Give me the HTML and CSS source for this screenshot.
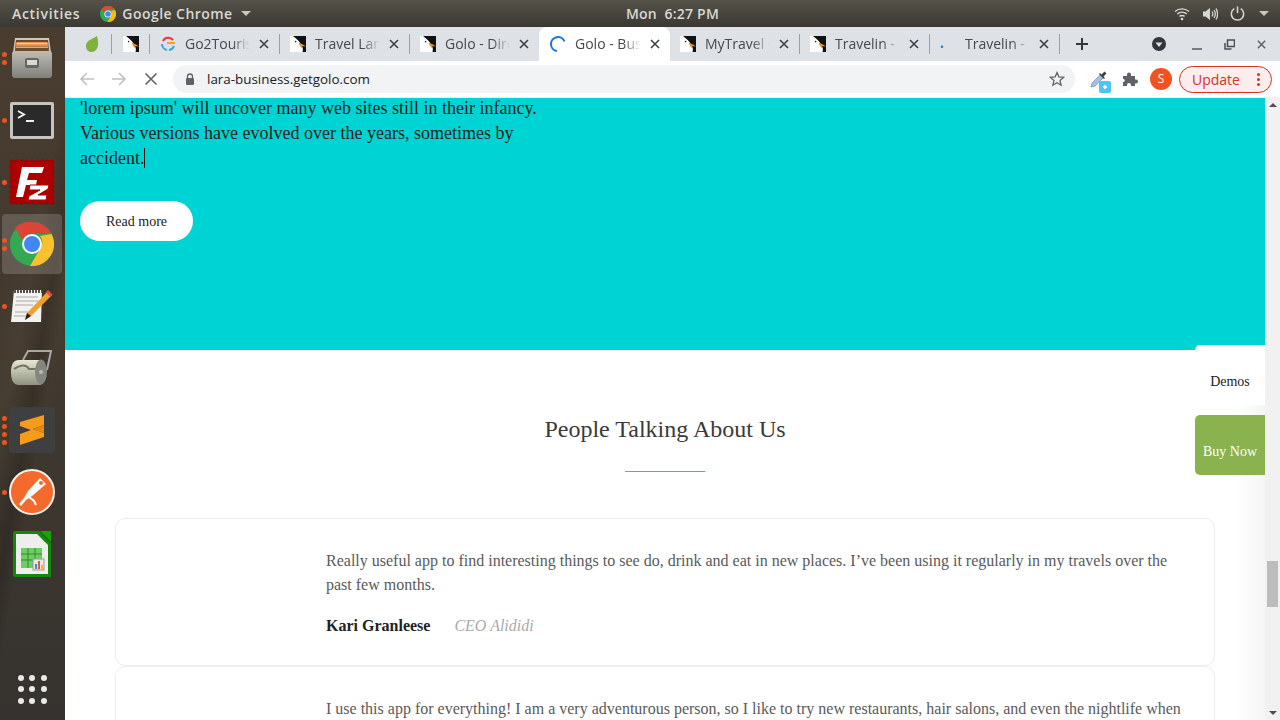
FILE: index.html
```html
<!DOCTYPE html>
<html lang="en">
<head>
  <meta charset="UTF-8" />
  <meta name="viewport" content="width=device-width, initial-scale=1.0"/>
  <title>Golo - Business</title>
  <link rel="stylesheet" href="styles.css">
</head>
<body>

  <svg class="defs" width="0" height="0">
    <symbol id="gull" viewBox="0 0 16 16">
      <rect width="16" height="16" fill="#fff"/>
      <path d="M3 0H16V16H12.5C13.5 13 12.5 10.5 11 8.5C9.5 5.5 7 3 3 0Z" fill="#111"/>
      <path d="M8.5 6.5L13 8.5L16 10.5L12.5 10L11.5 12L9.5 9Z" fill="#e8912d"/>
      <circle cx="5.6" cy="5.6" r="0.8" fill="#222"/>
    </symbol>
    <symbol id="x" viewBox="0 0 12 12">
      <path d="M2 2L10 10M10 2L2 10" stroke="currentColor" stroke-width="1.6" fill="none"/>
    </symbol>
    <linearGradient id="roller" x1="0" y1="0" x2="0" y2="1">
      <stop offset="0" stop-color="#e6e8d4"/><stop offset="1" stop-color="#8f9180"/>
    </linearGradient>
    <linearGradient id="cabinet" x1="0" y1="0" x2="0" y2="1">
      <stop offset="0" stop-color="#bdbcb7"/><stop offset="1" stop-color="#80807b"/>
    </linearGradient>
  </svg>

  <!-- Ubuntu top bar -->
  <header class="topbar">
    <div class="topbar-left">
      <span class="activities">Activities</span>
      <span class="app-name">
        <svg width="16" height="16" viewBox="0 0 16 16">
          <circle cx="8" cy="8" r="8" fill="#34a853"/>
          <path d="M8 0A8 8 0 0 1 15 4H8A4 4 0 0 0 4.4 6.2L1.5 3.2A8 8 0 0 1 8 0Z" fill="#ea4335"/>
          <path d="M15 4A8 8 0 0 1 7.5 16L11 10A4 4 0 0 0 11 5Z" fill="#fbbc05"/>
          <circle cx="8" cy="8" r="3.6" fill="#fff"/><circle cx="8" cy="8" r="2.8" fill="#4285f4"/>
        </svg>
        Google Chrome <i class="caret"></i>
      </span>
    </div>
    <div class="clock">Mon&nbsp; 6:27 PM</div>
    <div class="tray">
      <svg width="16" height="14" viewBox="0 0 16 14" fill="none" stroke="#d6d6d2" stroke-width="1.4">
        <path d="M1 4.5C5 1 11 1 15 4.5M3.2 7C6 4.6 10 4.6 12.8 7M5.4 9.4C7 8.2 9 8.2 10.6 9.4"/>
        <circle cx="8" cy="12" r="1.3" fill="#d6d6d2" stroke="none"/>
      </svg>
      <svg width="16" height="14" viewBox="0 0 16 14" fill="none" stroke="#d6d6d2" stroke-width="1.3">
        <path d="M1 4.5H3.5L8 1V13L3.5 9.5H1Z" fill="#d6d6d2" stroke="none"/>
        <path d="M10 4.5C11 6 11 8 10 9.5M12 3C13.6 5.4 13.6 8.6 12 11M14 1.5C16 5 16 9 14 12.5"/>
      </svg>
      <svg width="15" height="15" viewBox="0 0 15 15" fill="none" stroke="#d6d6d2" stroke-width="1.5">
        <path d="M4.3 2.6A6.2 6.2 0 1 0 10.7 2.6M7.5 0.5V7"/>
      </svg>
      <i class="caret"></i>
    </div>
  </header>

  <div class="desktop">
    <!-- Launcher -->
    <nav class="dock">
      <div class="dock-item">
        <div class="dots"><i></i><i></i></div>
        <svg width="40" height="42" viewBox="0 0 40 42">
          <path d="M3 1H37L39 16H1Z" fill="#c9c8c3"/>
          <path d="M4 3H36L37 14H3Z" fill="#6e4a2c"/>
          <path d="M4.5 5H35.5L36 9H4Z" fill="#e8934f"/>
          <path d="M4.5 6H35.5V7H4.5Z" fill="#f8d2a2"/>
          <path d="M4 9.5H36V11H4Z" fill="#f0a868"/>
          <rect x="0" y="14" width="40" height="27" rx="3" fill="url(#cabinet)"/>
          <rect x="13" y="21" width="14" height="10" rx="2" fill="#66655f"/>
          <rect x="15" y="23" width="10" height="5" fill="#d8d8d4"/>
        </svg>
      </div>
      <div class="dock-item">
        <div class="dots"><i></i></div>
        <svg width="44" height="37" viewBox="0 0 44 37">
          <rect width="44" height="37" rx="2" fill="#c4c4c0"/>
          <rect x="3" y="3" width="38" height="31" fill="#2a2a2a"/>
          <path d="M8 9L14 12.5L8 16" stroke="#eee" stroke-width="2" fill="none"/>
          <rect x="16" y="18" width="8" height="2" fill="#eee"/>
        </svg>
      </div>
      <div class="dock-item">
        <div class="dots"><i></i></div>
        <svg width="46" height="46" viewBox="0 0 46 46">
          <rect x="3" y="3" width="40" height="40" fill="#ad0000" stroke="#a00000" stroke-width="5" stroke-linecap="round" stroke-dasharray="0.1 4.9"/>
          <rect x="3" y="3" width="40" height="40" fill="#ad0000"/>
          <path d="M13 8H35L33 14H20L18 21H28L27 26H17L14 38H7Z" fill="#fff"/>
          <path d="M21 26H40L39 30L29 36H38L37 41H19L20 37L31 31H20Z" fill="#fff" stroke="#ad0000"/>
        </svg>
      </div>
      <div class="dock-item current">
        <div class="dots"><i></i><i></i></div>
        <svg width="44" height="44" viewBox="0 0 44 44">
          <circle cx="22" cy="22" r="22" fill="#34a853"/>
          <path d="M22 0A22 22 0 0 1 41.5 12H22A10 10 0 0 0 12.6 18.6L5 5.8A22 22 0 0 1 22 0Z" fill="#db4437"/>
          <path d="M41.5 12A22 22 0 0 1 20 44L30 27A10 10 0 0 0 30 14Z" fill="#fbc02d"/>
          <circle cx="22" cy="22" r="10" fill="#fff"/>
          <circle cx="22" cy="22" r="8" fill="#4285f4"/>
        </svg>
      </div>
      <div class="dock-item">
        <div class="dots"><i></i></div>
        <svg width="42" height="34" viewBox="0 0 42 34">
          <path d="M3 1H31L30 33H0Z" fill="#f2f2ee"/>
          <path d="M3 2.5H31" stroke="#555" stroke-width="3" stroke-dasharray="2 1"/>
          <path d="M5 8H27M5 12H27M4 16H22M4 23H19M3 27H15" stroke="#aaa"/>
          <path d="M37 2L41 6L20 27L14 31L16 24Z" fill="#f0a030"/>
          <path d="M37 1L41.5 5.5L39.5 8L35 3.5Z" fill="#d9534f"/>
          <path d="M16 24L14 31L20 27Z" fill="#222"/>
        </svg>
      </div>
      <div class="dock-item">
        <div class="dots"></div>
        <svg width="42" height="36" viewBox="0 0 42 36">
          <path d="M12 10L17 1H40L36 20" stroke="#a8a8a4" stroke-width="2" fill="none"/>
          <path d="M8 10H30V35H8Q0 35 0 22Q0 10 8 10Z" fill="url(#roller)"/>
          <path d="M3 19Q14 12 18 19H28" stroke="#73745f" stroke-width="2" fill="none"/>
          <ellipse cx="30" cy="22" rx="6" ry="12.5" fill="#868681"/>
          <circle cx="30" cy="22" r="2" fill="#bbb"/>
        </svg>
      </div>
      <div class="dock-item">
        <div class="dots"><i></i><i></i><i></i><i></i></div>
        <svg width="46" height="46" viewBox="0 0 46 46">
          <rect width="46" height="46" rx="3" fill="#3f3f3f"/>
          <path d="M11 15L35 8V18L24 22L35 26V30L11 38V27L22 23L11 19Z" fill="#f89b1c"/>
          <path d="M22 23L35 18V26L24 22Z" fill="#e58a10"/>
        </svg>
      </div>
      <div class="dock-item">
        <div class="dots"><i></i></div>
        <svg width="46" height="46" viewBox="0 0 46 46">
          <circle cx="23" cy="23" r="22" fill="#f4692c" stroke="#f4f0ec" stroke-width="2"/>
          <path d="M31 9L37 15L23 27L17 31L12 37L10 35L15 29L19 22Z" fill="#fff"/>
          <path d="M20 28L25 32L27 36" stroke="#fff" stroke-width="2" fill="none"/>
          <circle cx="32" cy="14" r="2" fill="#f4692c"/>
        </svg>
      </div>
      <div class="dock-item">
        <div class="dots"></div>
        <svg width="38" height="46" viewBox="0 0 38 46">
          <path d="M2 0H26L38 12V46H2Q0 46 0 44V2Q0 0 2 0Z" fill="#138a07"/>
          <path d="M27 0H38V11Z" fill="#18a303"/>
          <path d="M3 3H24L35 14V43H3Z" fill="#eeeeec"/>
          <rect x="8" y="17" width="21" height="20" fill="#6fcb63"/>
          <path d="M8 23H29M8 29H29M15 17V37M22 17V37" stroke="#2f8d23"/>
          <rect x="20" y="28" width="11" height="11" fill="#e8e8e8" stroke="#999"/>
          <rect x="22" y="33" width="2" height="5" fill="#3d8fd0"/>
          <rect x="25" y="30" width="2" height="8" fill="#d9622b"/>
          <rect x="28" y="34" width="2" height="4" fill="#eeb32a"/>
        </svg>
      </div>
      <div class="dock-item apps">
        <div class="dots"></div>
        <div class="apps-grid"><i></i><i></i><i></i><i></i><i></i><i></i><i></i><i></i><i></i></div>
      </div>
    </nav>

    <div class="browser">
      <!-- Tabs -->
      <div class="tabstrip">
        <div class="tab pinned first">
          <svg width="16" height="16" viewBox="0 0 16 16">
            <path d="M12 0C8 3 1 4 1 10C1 13 3 16 6 16C12 16 15 10 12 0Z" fill="#7cb342"/>
          </svg>
        </div>
        <i class="sep"></i>
        <div class="tab pinned"><svg class="fav"><use href="#gull"/></svg></div>
        <i class="sep"></i>
        <div class="tab">
          <svg class="fav" viewBox="0 0 16 16" fill="none" stroke-width="2">
            <path d="M13 4A6 6 0 0 0 3 5" stroke="#e53935"/>
            <path d="M2 8A6 6 0 0 0 7 14" stroke="#29a9e0"/>
            <path d="M7 7H15" stroke="#f2a31a"/>
            <path d="M14 10A6 6 0 0 1 9 14" stroke="#29a9e0"/>
          </svg>
          <span class="title">Go2Tourism</span>
          <svg class="close"><use href="#x"/></svg>
        </div>
        <i class="sep"></i>
        <div class="tab">
          <svg class="fav"><use href="#gull"/></svg>
          <span class="title">Travel Landing</span>
          <svg class="close"><use href="#x"/></svg>
        </div>
        <i class="sep"></i>
        <div class="tab">
          <svg class="fav"><use href="#gull"/></svg>
          <span class="title">Golo - Directory</span>
          <svg class="close"><use href="#x"/></svg>
        </div>
        <div class="tab active">
          <svg class="fav" viewBox="0 0 16 16" fill="none">
            <path d="M14.5 5.5A7 7 0 1 0 7 15" stroke="#1a73e8" stroke-width="2"/>
          </svg>
          <span class="title">Golo - Business</span>
          <svg class="close"><use href="#x"/></svg>
        </div>
        <div class="tab">
          <svg class="fav"><use href="#gull"/></svg>
          <span class="title">MyTravel - Tours</span>
          <svg class="close"><use href="#x"/></svg>
        </div>
        <i class="sep"></i>
        <div class="tab">
          <svg class="fav"><use href="#gull"/></svg>
          <span class="title">Travelin - Tours</span>
          <svg class="close"><use href="#x"/></svg>
        </div>
        <i class="sep"></i>
        <div class="tab">
          <svg class="fav" viewBox="0 0 16 16"><circle cx="2" cy="10.7" r="1.2" fill="#1a73e8"/></svg>
          <span class="title">Travelin - Tours</span>
          <svg class="close"><use href="#x"/></svg>
        </div>
        <i class="sep"></i>
        <svg class="new-tab" width="12" height="12" viewBox="0 0 12 12">
          <path d="M6 0V12M0 6H12" stroke="#33363a" stroke-width="2"/>
        </svg>
        <div class="window-btns">
          <svg width="14" height="14" viewBox="0 0 14 14">
            <circle cx="7" cy="7" r="7" fill="#33373c"/>
            <path d="M3.5 5.5H10.5L7 10Z" fill="#dee1e6"/>
          </svg>
          <svg width="11" height="11" viewBox="0 0 11 11"><path d="M0 10H10" stroke="#5f6368" stroke-width="1.6"/></svg>
          <svg width="11" height="11" viewBox="0 0 11 11" fill="none" stroke="#4a4d52" stroke-width="1.5">
            <rect x="3.5" y="1" width="7" height="6.5"/><path d="M1 4V10H7.5" />
          </svg>
          <svg class="win-close" width="11" height="11"><use href="#x"/></svg>
        </div>
      </div>

      <!-- Toolbar -->
      <div class="toolbar">
        <div class="nav-btn">
          <svg width="16" height="16" viewBox="0 0 16 16" fill="none" stroke="#bdc1c6" stroke-width="1.6"><path d="M15 8H2M8 2L2 8L8 14"/></svg>
        </div>
        <div class="nav-btn">
          <svg width="16" height="16" viewBox="0 0 16 16" fill="none" stroke="#bdc1c6" stroke-width="1.6"><path d="M1 8H14M8 2L14 8L8 14"/></svg>
        </div>
        <div class="nav-btn">
          <svg width="14" height="14" viewBox="0 0 14 14" fill="none" stroke="#5f6368" stroke-width="1.6"><path d="M1.5 1.5L12.5 12.5M12.5 1.5L1.5 12.5"/></svg>
        </div>
        <div class="omnibox">
          <svg width="12" height="14" viewBox="0 0 12 14">
            <rect x="2" y="6" width="8" height="7" rx="1" fill="#5f6368"/>
            <path d="M3.5 6V4.5A2.5 2.5 0 0 1 8.5 4.5V6" fill="none" stroke="#5f6368" stroke-width="1.3"/>
          </svg>
          <span class="url">lara-business.getgolo.com</span>
          <svg class="star" width="16" height="16" viewBox="0 0 16 16">
            <path d="M8 1.6L9.9 6L14.6 6.4L11 9.5L12.1 14.2L8 11.7L3.9 14.2L5 9.5L1.4 6.4L6.1 6Z" fill="none" stroke="#5f6368" stroke-width="1.3"/>
          </svg>
        </div>
        <div class="ext-btn dropper">
          <svg width="18" height="18" viewBox="0 0 18 18">
            <path d="M1 17L2 13L10 5L13 8L5 16Z" fill="#9cc3e4" stroke="#6f7c88" stroke-width="0.6"/>
            <path d="M9 4L14 9L15 8L13.5 6.5L16.5 3.5L14.5 1.5L11.5 4.5L10 3Z" fill="#3c4043"/>
          </svg>
          <i class="ext-badge"></i>
        </div>
        <div class="ext-btn">
          <svg width="16" height="16" viewBox="0 0 16 16">
            <path d="M1 5H5V3.5A2 2 0 0 1 9 3.5V5H13V8.5H14A2 2 0 0 1 14 12.5H13V15H9V14A2 2 0 0 0 5 14V15H1V11H2A2 2 0 0 0 2 8H1Z" fill="#5f6368"/>
          </svg>
        </div>
        <div class="avatar">S</div>
        <div class="update">
          <span>Update</span>
          <i class="kebab"><b></b><b></b><b></b></i>
        </div>
      </div>

      <div class="viewport">
        <main class="page">
          <section class="hero">
            <p>'lorem ipsum' will uncover many web sites still in their infancy. Various versions have evolved over the years, sometimes by <span class="typed">accident.</span></p>
            <a class="read-more">Read more</a>
          </section>

          <section class="testimonials">
            <h2>People Talking About Us</h2>
            <div class="rule"></div>
            <article class="card">
              <p>Really useful app to find interesting things to see do, drink and eat in new places. I’ve been using it regularly in my travels over the past few months.</p>
              <div class="byline"><strong>Kari Granleese</strong><em>CEO Alididi</em></div>
            </article>
            <article class="card">
              <p>I use this app for everything! I am a very adventurous person, so I like to try new restaurants, hair salons, and even the nightlife when I travel to new places.</p>
            </article>
          </section>

          <div class="page-shade"></div>
          <div class="side-links">
            <a class="demos">Demos</a>
            <a class="buy">Buy Now</a>
          </div>
        </main>
        <div class="scrollbar">
          <i class="arrow up"></i>
          <div class="thumb"></div>
          <i class="arrow down"></i>
        </div>
      </div>
    </div>
  </div>

</body>
</html>
```

FILE: styles.css
```css
* { box-sizing: border-box; }
html, body { height: 100%; }
body { margin: 0; overflow: hidden; font-family: "Open Sans", sans-serif; background: #3a3630; }
.defs { display: block; height: 0; }

/* top bar */
.topbar {
  height: 27px; display: grid; grid-template-columns: 1fr auto 1fr; align-items: center;
  padding: 0 11px 0 12px;
  background: linear-gradient(#55524a, #3a3832);
  color: #d9d8d3; font-size: 14px; font-weight: 600;
}
.topbar-left { display: flex; align-items: center; gap: 20px; }
.activities { letter-spacing: 0.7px; }
.app-name { display: flex; align-items: center; gap: 6px; letter-spacing: 0.45px; }
.caret {
  display: inline-block; width: 0; height: 0; margin-left: 2px;
  border: 5px solid transparent; border-top-color: #c9c8c3; border-bottom: 0;
}
.clock { margin-left: 64px; letter-spacing: 0.2px; }
.tray { justify-self: end; display: flex; align-items: center; gap: 12px; }

.desktop { display: flex; height: 693px; }

/* launcher */
.dock {
  width: 65px; flex: none; display: flex; flex-direction: column;
  background:
    linear-gradient(100deg, transparent 40%, rgba(20,16,12,0.25) 52%, transparent 60%),
    linear-gradient(115deg, transparent 30%, rgba(90,78,60,0.28) 45%, transparent 60%),
    linear-gradient(#4a3d30, #3e372e 60%, #35332f);
}
.dock-item { height: 62px; flex: none; display: flex; align-items: center; justify-content: center; padding-right: 1px; position: relative; }
.dock-item.current::before {
  content: ""; position: absolute; left: 2px; top: 1px; width: 60px; height: 60px;
  border-radius: 4px; background: rgba(255,255,255,0.17);
}
.dock-item svg { position: relative; }
.dots { position: absolute; left: 2px; top: 0; bottom: 0; display: flex; flex-direction: column; justify-content: center; gap: 3px; }
.dots i { width: 5px; height: 5px; border-radius: 50%; background: #e95420; }
.apps { margin-top: auto; }
.apps-grid { display: grid; grid-template-columns: repeat(3, 6px); gap: 5.5px; }
.apps-grid i { width: 6px; height: 6px; border-radius: 50%; background: #e9e9e7; }

.browser { flex: 1; min-width: 0; display: flex; flex-direction: column; }

/* tabs */
.tabstrip { height: 34px; flex: none; display: flex; align-items: center; padding-left: 1px; background: #dee1e6; }
.tab { width: 129px; height: 34px; flex: none; display: flex; align-items: center; gap: 9px; padding: 0 9px 0 10px; color: #45484d; font-size: 14px; line-height: 32px; }
.tab.pinned { width: 37px; padding: 0; justify-content: center; }
.tab.pinned.first { width: 45px; padding-left: 9px; }
.tab.active { width: 131px; background: #fff; border-radius: 8px 8px 0 0; padding-left: 11px; }
.tab .title { flex: 1; min-width: 0; white-space: nowrap; overflow: hidden; -webkit-mask-image: linear-gradient(90deg, #000 72%, transparent 98%); mask-image: linear-gradient(90deg, #000 72%, transparent 98%); }
.fav { width: 16px; height: 16px; flex: none; }
.close { width: 12px; height: 12px; flex: none; margin-left: -2px; color: #3c4043; }
.sep { width: 1px; height: 20px; flex: none; background: #9aa0a6; }
.new-tab { margin-left: 16px; }
.window-btns { margin-left: auto; display: grid; grid-template-columns: 44px repeat(3, 32px); justify-items: center; align-items: center; padding-right: 3px; }
.win-close { color: #5f6368; }

/* toolbar */
.toolbar { height: 37px; flex: none; display: flex; align-items: center; padding: 0 8px 0 6px; background: #fff; border-bottom: 1px solid #eee; }
.nav-btn { width: 32px; height: 28px; flex: none; display: flex; align-items: center; justify-content: center; }
.omnibox {
  flex: 1; height: 28px; margin-left: 6px; display: flex; align-items: center; padding: 0 10px 0 11px;
  border-radius: 14px; background: #f1f3f4; color: #202124; font-size: 13.4px;
}
.url { margin-left: 11px; }
.star { margin-left: auto; }
.ext-btn { width: 31px; height: 28px; flex: none; display: flex; align-items: center; justify-content: center; position: relative; }
.dropper { margin-left: 8px; }
.ext-badge { position: absolute; right: 3px; bottom: 0; width: 12px; height: 12px; border-radius: 2px; background: radial-gradient(circle, #fff 1.5px, #4fc3f7 2px); }
.avatar { width: 22px; height: 22px; flex: none; margin: 0 7px 0 5px; border-radius: 50%; background: #f4511e; color: #fff; font-size: 12px; line-height: 22px; text-align: center; }
.update {
  width: 93px; height: 27px; flex: none; display: flex; align-items: center; justify-content: space-between;
  padding: 0 11px 0 12px; border: 1px solid #d93025; border-radius: 14px; background: #fdeeed; color: #d93025; font-size: 14px;
}
.kebab { display: flex; flex-direction: column; gap: 2px; }
.kebab b { width: 3px; height: 3px; border-radius: 50%; background: #d93025; }

/* page */
.viewport { flex: 1; min-height: 0; display: flex; }
.page { flex: 1; min-width: 0; overflow: hidden; position: relative; background: #fff; font-family: "Liberation Serif", serif; }
.hero { display: flow-root; height: 252px; padding: 0 15px; background: #00d3d3; color: #222; }
.hero p { width: 470px; margin: -2px 0 30px; font-size: 18px; line-height: 25px; }
.typed { border-right: 1px solid #111; }
.read-more { display: inline-block; width: 113px; height: 40px; border-radius: 20px; background: #fff; color: #222; font-size: 14px; line-height: 41px; text-align: center; }

.testimonials { padding: 65px 50px 0; }
.testimonials h2 { margin: 0; font-size: 24px; font-weight: 400; line-height: 28px; text-align: center; color: #3a3a3a; }
.rule { width: 80px; height: 1px; margin: 28px auto 46px; background: #00d3d3; }
.card { height: 148px; padding: 30px 30px 0 210px; border: 1px solid #eee; border-radius: 10px; color: #5a5a5a; font-size: 16px; line-height: 24px; }
.card p { margin: 0; }
.byline { margin-top: 17px; display: flex; gap: 24px; }
.byline strong { color: #222; }
.byline em { color: #aaa; }

.page-shade { position: absolute; right: 0; top: 252px; bottom: 0; width: 30px; background: linear-gradient(90deg, rgba(245,245,245,0), #f5f5f5); }
.side-links { position: absolute; right: 0; top: 247px; width: 70px; display: flex; flex-direction: column; gap: 10px; font-size: 14px; text-align: center; }
.side-links a { height: 60px; padding-top: 29px; line-height: 16px; border-radius: 5px 0 0 5px; }
.demos { background: #fff; color: #222; }
.buy { background: #8ab34f; color: #fff; }

.scrollbar { width: 15px; flex: none; display: flex; flex-direction: column; align-items: center; background: #f1f1f1; }
.arrow { width: 0; height: 0; border: 4px solid transparent; }
.arrow.up { margin-top: 5px; border-bottom: 4px solid #505050; border-top: 0; }
.arrow.down { margin-top: auto; margin-bottom: 5px; border-top: 4px solid #505050; border-bottom: 0; }
.thumb { width: 11px; height: 46px; margin-top: 454px; background: #bcbcbc; }
```
